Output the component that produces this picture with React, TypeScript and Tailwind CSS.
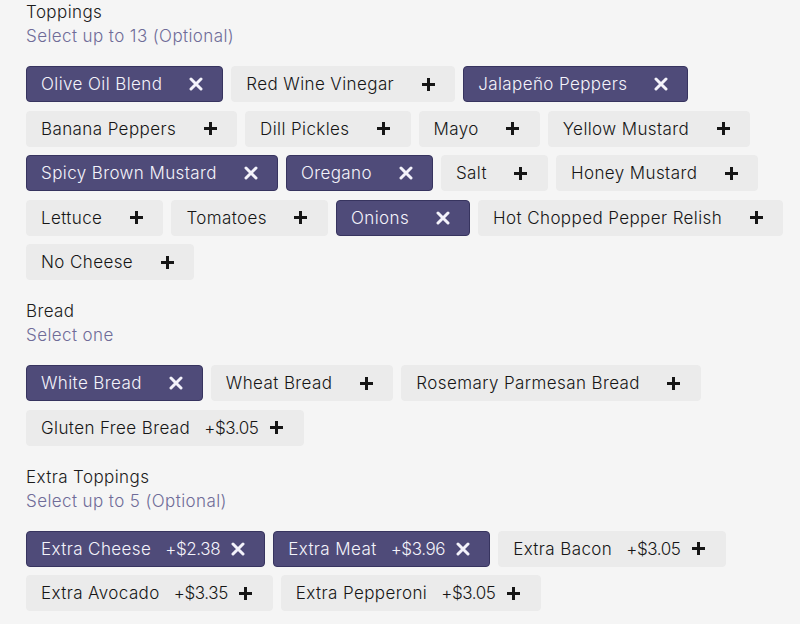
import React from 'react';

type Option = { name: string; price?: string; selected?: boolean };

const sections: { title: string; hint: string; options: Option[] }[] = [
  {
    title: 'Toppings',
    hint: 'Select up to 13 (Optional)',
    options: [
      { name: 'Olive Oil Blend', selected: true },
      { name: 'Red Wine Vinegar' },
      { name: 'Jalapeño Peppers', selected: true },
      { name: 'Banana Peppers' },
      { name: 'Dill Pickles' },
      { name: 'Mayo' },
      { name: 'Yellow Mustard' },
      { name: 'Spicy Brown Mustard', selected: true },
      { name: 'Oregano', selected: true },
      { name: 'Salt' },
      { name: 'Honey Mustard' },
      { name: 'Lettuce' },
      { name: 'Tomatoes' },
      { name: 'Onions', selected: true },
      { name: 'Hot Chopped Pepper Relish' },
      { name: 'No Cheese' },
    ],
  },
  {
    title: 'Bread',
    hint: 'Select one',
    options: [
      { name: 'White Bread', selected: true },
      { name: 'Wheat Bread' },
      { name: 'Rosemary Parmesan Bread' },
      { name: 'Gluten Free Bread', price: '+$3.05' },
    ],
  },
  {
    title: 'Extra Toppings',
    hint: 'Select up to 5 (Optional)',
    options: [
      { name: 'Extra Cheese', price: '+$2.38', selected: true },
      { name: 'Extra Meat', price: '+$3.96', selected: true },
      { name: 'Extra Bacon', price: '+$3.05' },
      { name: 'Extra Avocado', price: '+$3.35' },
      { name: 'Extra Pepperoni', price: '+$3.05' },
    ],
  },
];

function PlusIcon() {
  return (
    <svg width="15" height="15" viewBox="0 0 15 15">
      <path d="M7.5 1v13M1 7.5h13" stroke="currentColor" strokeWidth="3" />
    </svg>
  );
}

function CloseIcon() {
  return (
    <svg width="14" height="14" viewBox="0 0 14 14">
      <path d="M2 2l10 10M12 2L2 12" stroke="currentColor" strokeWidth="3" strokeLinecap="round" />
    </svg>
  );
}

function Chip({ option }: { option: Option }) {
  const { name, price, selected } = option;
  return (
    <button
      className={
        selected
          ? 'flex h-9 items-center rounded-[4px] border border-[#37345f] bg-[#4f4b79] pl-[14px] pr-4 text-[#f4f3fb]'
          : 'flex h-9 items-center rounded-[4px] border border-[#ebebeb] bg-[#ebebeb] pl-[14px] pr-4 text-[#161616]'
      }
    >
      <span className="whitespace-nowrap">{name}</span>
      {price && <span className="ml-[14px] whitespace-nowrap tracking-[-0.4px]">{price}</span>}
      <span className={price ? 'ml-2 flex h-5 w-5 items-center justify-center' : 'ml-6 flex h-5 w-5 items-center justify-center'}>
        {selected ? <CloseIcon /> : <PlusIcon />}
      </span>
    </button>
  );
}

export default function App() {
  return (
    <div
      className="min-h-screen bg-[#f5f5f5] pl-[26px] pr-[10px] text-[17px] leading-6 font-light tracking-[0.4px]"
      style={{ fontFamily: 'Inter, "Liberation Sans", sans-serif' }}
    >
      {sections.map((section, i) => (
        <section key={section.title} className={i === 0 ? '' : 'mt-[19px]'}>
          <h2 className="text-[#1b1b1b]">{section.title}</h2>
          <p className="text-[#6f6c98]">{section.hint}</p>
          <div className="mt-[18px] flex flex-wrap gap-x-2 gap-y-[8.5px]">
            {section.options.map((o) => (
              <Chip key={o.name} option={o} />
            ))}
          </div>
        </section>
      ))}
    </div>
  );
}
